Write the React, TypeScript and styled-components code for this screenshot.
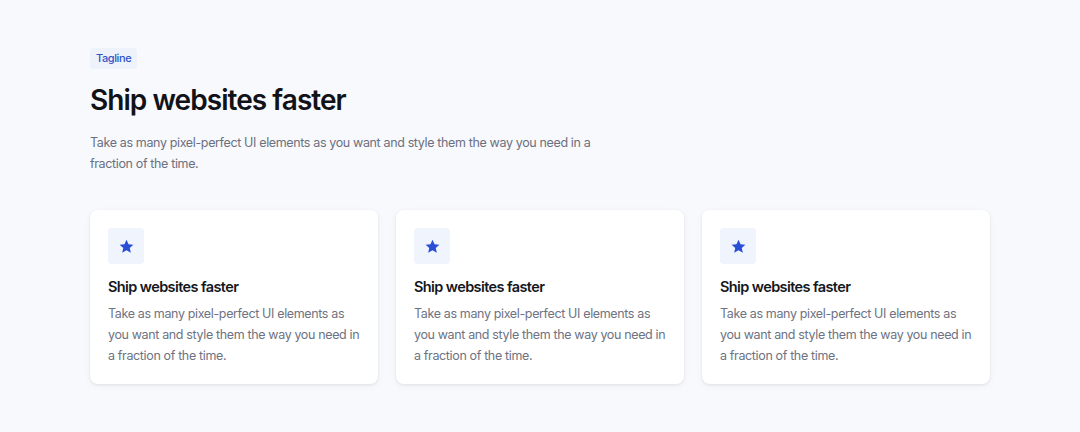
import React from "react";
import styled, { createGlobalStyle } from "styled-components";

const Global = createGlobalStyle`
  html, body { margin: 0; padding: 0; background: #f8f9fc; }
  body { font-family: Inter, "Noto Sans", sans-serif; -webkit-font-smoothing: antialiased; }
  * { box-sizing: border-box; }
`;

const Section = styled.section`
  padding: 46px 90px 48px;
  width: 1080px;
  height: 432px;
`;

const Tagline = styled.span`
  display: inline-block;
  padding: 4px 6px;
  background: #eef2fb;
  color: #2f54c6;
  font-size: 11px;
  line-height: 13px;
  font-weight: 500;
  letter-spacing: -0.4px;
  border-radius: 4px;
`;

const Heading = styled.h1`
  margin: 14px 0 0;
  font-size: 28px;
  line-height: 34px;
  font-weight: 600;
  letter-spacing: -0.95px;
  color: #111318;
`;

const Lead = styled.p`
  margin: 15px 0 0;
  max-width: 520px;
  font-size: 12.5px;
  line-height: 21px;
  letter-spacing: -0.36px;
  color: #6b7080;
`;

const Grid = styled.div`
  margin-top: 36px;
  display: grid;
  grid-template-columns: repeat(3, 288px);
  gap: 18px;
`;

const Card = styled.div`
  background: #ffffff;
  border-radius: 8px;
  padding: 18px;
  box-shadow: 0 1px 3px rgba(20, 30, 60, 0.08), 0 2px 8px rgba(20, 30, 60, 0.04);
`;

const IconBox = styled.div`
  width: 36px;
  height: 36px;
  border-radius: 4px;
  background: #f0f4fd;
  display: flex;
  align-items: center;
  justify-content: center;
`;

const CardTitle = styled.h3`
  margin: 13px 0 0;
  font-size: 14.5px;
  line-height: 20px;
  font-weight: 600;
  letter-spacing: -0.6px;
  color: #15171c;
`;

const CardText = styled.p`
  margin: 6px 0 0;
  font-size: 12.5px;
  line-height: 21px;
  letter-spacing: -0.36px;
  color: #6e7282;
`;

const Star = () => (
  <svg width="17" height="17" viewBox="0 0 24 24" aria-hidden="true">
    <path
      fill="#2a4fd6"
      d="M12 2.5l2.9 6.3 6.8.7-5.1 4.6 1.5 6.8L12 17.4l-6.1 3.5 1.5-6.8-5.1-4.6 6.8-.7z"
    />
  </svg>
);

const items = [0, 1, 2];

export default function App() {
  return (
    <>
      <Global />
      <Section>
        <Tagline>Tagline</Tagline>
        <Heading>Ship websites faster</Heading>
        <Lead>
          Take as many pixel-perfect UI elements as you want and style them the way you need in a
          fraction of the time.
        </Lead>
        <Grid>
          {items.map((i) => (
            <Card key={i}>
              <IconBox>
                <Star />
              </IconBox>
              <CardTitle>Ship websites faster</CardTitle>
              <CardText>
                Take as many pixel-perfect UI elements as you want and style them the way you need
                in a fraction of the time.
              </CardText>
            </Card>
          ))}
        </Grid>
      </Section>
    </>
  );
}
